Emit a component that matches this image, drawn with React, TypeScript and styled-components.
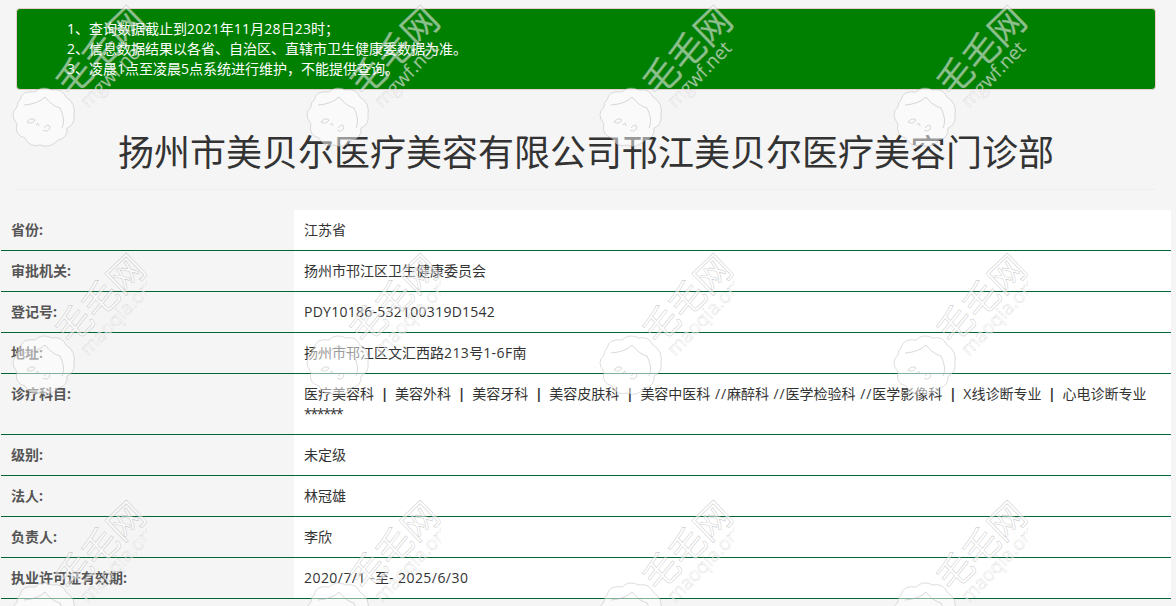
import React from 'react';
import styled, { createGlobalStyle } from 'styled-components';

const GlobalStyle = createGlobalStyle`
  html, body {
    margin: 0;
    height: 606px;
    overflow: hidden;
    background: #f5f5f5;
    color: #333;
    font-family: "Open Sans", "Noto Sans CJK SC", sans-serif;
    font-size: 14px;
    line-height: 20px;
  }
`;

const Page = styled.div`
  position: relative;
  width: 1176px;
  height: 606px;
  overflow: hidden;
`;

const Container = styled.div`
  width: 1170px;
  margin-left: 1px;
  padding-top: 8px;
`;

const Notice = styled.div`
  margin: 0 15px;
  padding: 10px 10px 10px 50px;
  background: #008000;
  border: 1px solid #ebccd1;
  border-radius: 4px;
  color: #fff;
`;

const NoticeLine = styled.div`
  white-space: nowrap;
`;

const Header = styled.div`
  margin: 40px 15px 20px;
  padding-bottom: 19px;
  border-bottom: 1px solid #eee;
`;

const Title = styled.h1`
  margin: 0;
  font-family: "Noto Sans CJK SC", sans-serif;
  font-size: 36px;
  font-weight: 400;
  line-height: 40px;
  text-align: center;
  color: #333;
`;

const Table = styled.div`
  display: flex;
  flex-direction: column;
`;

const Row = styled.div`
  display: grid;
  grid-template-columns: 293px 877px;
  border-bottom: 1px solid #006633;
`;

const Label = styled.div`
  padding: 10px;
  font-weight: 700;
  color: #555;
`;

const Value = styled.div`
  padding: 10px;
  background: #fff;
  color: #333;
`;

const Pipe = styled.span`
  margin: 0 6.7px;
  font-weight: 700;
`;

const Latin = styled.span<{ $track?: number }>`
  letter-spacing: ${(p) => p.$track ?? 0.3}px;
`;

const Overlay = styled.div`
  position: absolute;
  top: 0;
  left: 0;
  display: grid;
  grid-template-columns: repeat(4, 293.5px);
  grid-auto-rows: 247.5px;
  pointer-events: none;
`;

const Tile = styled.svg`
  display: block;
  width: 293.5px;
  height: 247.5px;
  overflow: visible;
`;

const Mark = styled.text`
  font-family: "Noto Sans CJK SC", sans-serif;
  font-size: 36px;
  font-weight: 400;
  fill: rgba(255, 255, 255, 0.55);
  stroke: rgba(150, 150, 150, 0.45);
  stroke-width: 0.6px;
`;

const Site = styled.text`
  font-family: "Open Sans", sans-serif;
  font-size: 19px;
  fill: rgba(255, 255, 255, 0.6);
  stroke: rgba(150, 150, 150, 0.4);
  stroke-width: 0.4px;
`;

const CloudBody = styled.path`
  fill: rgba(255, 255, 255, 0.5);
  stroke: rgba(170, 170, 170, 0.4);
  stroke-width: 1;
`;

const CloudLine = styled.path`
  fill: none;
  stroke: rgba(170, 170, 170, 0.45);
  stroke-width: 1;
`;

const Watermark = ({ site, id }: { site: string; id: number }) => (
  <Tile viewBox="0 0 293.5 247.5">
    <clipPath id={`site-clip-${id}`}>
      <rect x={60} y={20} width={87} height={100} />
    </clipPath>
    <Mark x={98} y={49} textAnchor="middle" dominantBaseline="central" transform="rotate(-44 98 49)">
      毛毛网
    </Mark>
    <g clipPath={`url(#site-clip-${id})`}>
      <Site x={83} y={104} dominantBaseline="central" transform="rotate(-46 83 104)">
        {site}
      </Site>
    </g>
    <CloudBody d="M20 100Q22 90 35 92Q42 85 52 90Q62 88 66 97Q76 103 74 115Q75 125 67 128Q68 138 58 140Q50 149 40 145Q30 148 25 138Q14 135 17 124Q9 114 17 107Q17 102 20 100Z" />
    <CloudLine d="M24 105Q38 104 45 97Q52 106 60 108Q66 120 62 128M27 122Q31 117 35 120Q32 125 27 122ZM36 125Q38 121 39 126M44 128Q49 122 50 128Q47 133 43 130" />
  </Tile>
);

const rows: { label: string; value: React.ReactNode }[] = [
  { label: '省份:', value: '江苏省' },
  { label: '审批机关:', value: '扬州市邗江区卫生健康委员会' },
  { label: '登记号:', value: <Latin $track={0.26}>PDY10186-532100319D1542</Latin> },
  {
    label: '地址:',
    value: (
      <>
        扬州市邗江区文汇西路<Latin $track={0.4}>213</Latin>号<Latin $track={0.4}>1-6F</Latin>南
      </>
    ),
  },
  {
    label: '诊疗科目:',
    value: (
      <>
        医疗美容科<Pipe>|</Pipe>美容外科<Pipe>|</Pipe>美容牙科<Pipe>|</Pipe>美容皮肤科<Pipe>|</Pipe>
        美容中医科<Latin $track={0.9}> //</Latin>麻醉科<Latin $track={0.9}> //</Latin>医学检验科
        <Latin $track={0.9}> //</Latin>医学影像科<Pipe>|</Pipe>X线诊断专业<Pipe>|</Pipe>心电诊断专业{' '}
        <Latin $track={-1.3}>******</Latin>
      </>
    ),
  },
  { label: '级别:', value: '未定级' },
  { label: '法人:', value: '林冠雄' },
  { label: '负责人:', value: '李欣' },
  {
    label: '执业许可证有效期:',
    value: (
      <>
        <Latin $track={0.45}>2020/7/1 -</Latin>至<Latin $track={0.45}>- 2025/6/30</Latin>
      </>
    ),
  },
];

const App: React.FC = () => (
  <Page>
    <GlobalStyle />
    <Container>
      <Notice>
        <NoticeLine>
          1、查询数据截止到<Latin $track={0.2}>2021</Latin>年<Latin $track={0.2}>11</Latin>月
          <Latin $track={0.2}>28</Latin>日<Latin $track={0.2}>23</Latin>时&#xFF1B;
        </NoticeLine>
        <NoticeLine>2、信息数据结果以各省、自治区、直辖市卫生健康委数据为准。</NoticeLine>
        <NoticeLine>3、凌晨1点至凌晨5点系统进行维护&#xFF0C;不能提供查询。</NoticeLine>
      </Notice>
      <Header>
        <Title>扬州市美贝尔医疗美容有限公司邗江美贝尔医疗美容门诊部</Title>
      </Header>
      <Table>
        {rows.map((row) => (
          <Row key={row.label}>
            <Label>{row.label}</Label>
            <Value>{row.value}</Value>
          </Row>
        ))}
      </Table>
    </Container>
    <Overlay>
      {Array.from({ length: 12 }, (_, i) => (
        <Watermark key={i} id={i} site={i < 4 ? 'mgwf.net' : 'maoqia.org'} />
      ))}
    </Overlay>
  </Page>
);

export default App;
